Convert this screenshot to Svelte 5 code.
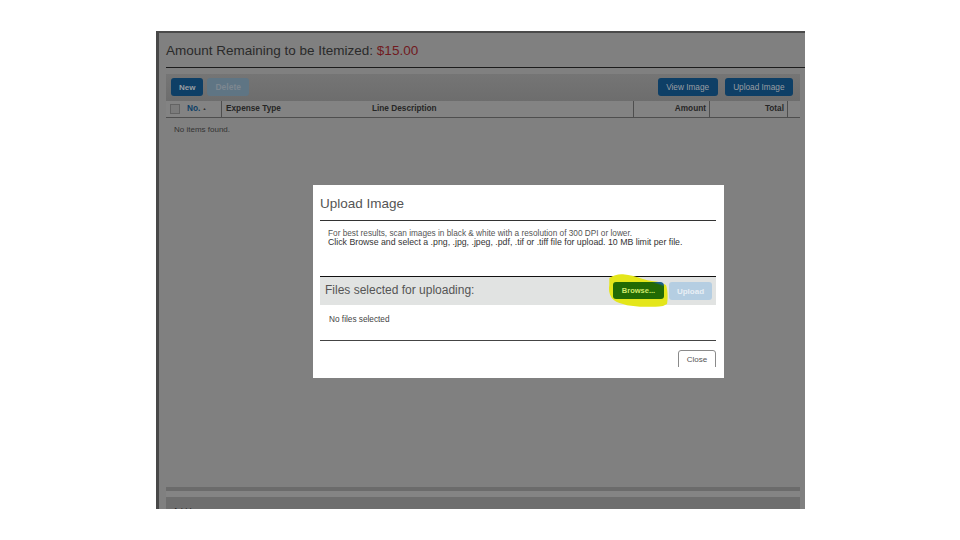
<script>
  const columns = [
    { label: 'Expense Type', cls: 'type' },
    { label: 'Line Description', cls: 'desc' },
    { label: 'Amount', cls: 'amount' },
    { label: 'Total', cls: 'total' },
  ];
</script>

<div class="shot">
  <div class="page">
    <h1>Amount Remaining to be Itemized: <span class="due">$15.00</span></h1>

    <div class="toolbar">
      <button class="btn">New</button>
      <button class="btn off">Delete</button>
      <span class="grow"></span>
      <button class="btn wide">View Image</button>
      <button class="btn wide">Upload Image</button>
    </div>

    <div class="thead">
      <div class="check"><span class="box"></span></div>
      <div class="no">No. <span class="sort">▲</span></div>
      {#each columns as c}
        <div class={c.cls}>{c.label}</div>
      {/each}
      <div class="end"></div>
    </div>
    <div class="empty">No items found.</div>

    <div class="bottom">
      <div class="band-dark"></div>
      <div class="band-light"></div>
      <div class="add">Add Image</div>
    </div>
  </div>

  <div class="modal">
    <h2>Upload Image</h2>
    <div class="hint">
      <div>For best results, scan images in black &amp; white with a resolution of 300 DPI or lower.</div>
      <div class="strong">Click Browse and select a .png, .jpg, .jpeg, .pdf, .tif or .tiff file for upload. 10 MB limit per file.</div>
    </div>
    <div class="files">
      <span class="files-title">Files selected for uploading:</span>
      <span class="browse-wrap">
        <svg class="marker" width="62" height="36" viewBox="0 0 62 36" aria-hidden="true">
          <path d="M1.3 4 C6 1 10 0 15 0.3 C22 1 29 3 35 5 C41 7 47 7 52 8.3 L58 11 C60 17 60 25 59 30 L55 32 C47 33 40 33 32 32.7 C26 32 20 32 15 30 C10 29 6 27 3.7 24 C1 20 0.5 15 1.3 11 Z" fill="#e4e61a" />
        </svg>
        <button class="browse">Browse...</button>
      </span>
      <button class="upload">Upload</button>
    </div>
    <div class="none">No files selected</div>
    <div class="foot">
      <button class="close">Close</button>
    </div>
  </div>
</div>

<style>
  :global(body) {
    margin: 0;
    background: #fff;
  }

  .shot {
    position: relative;
    width: 649px;
    height: 478px;
    margin: 31px 0 0 156px;
    overflow: hidden;
    font-family: "Liberation Sans", Arial, sans-serif;
  }

  .page {
    box-sizing: border-box;
    height: 100%;
    padding: 0 5px 0 7px;
    background: #808080;
    border-top: 2px solid #4a4a4a;
    border-left: 3px solid #484848;
    display: flex;
    flex-direction: column;
  }

  h1 {
    margin: 0 -5px 0 0;
    height: 34px;
    line-height: 36px;
    font-size: 13.5px;
    font-weight: 400;
    color: #2a2a2a;
    border-bottom: 1px solid #1c1c1c;
  }

  .due { color: #701a20; }

  .toolbar {
    margin-top: 6px;
    height: 27px;
    padding: 4px 7px 0 5px;
    box-sizing: border-box;
    display: flex;
    align-items: flex-start;
    gap: 4px;
    background: linear-gradient(#757575, #6d6d6d);
  }

  .grow { flex: 1; }

  .btn {
    height: 18px;
    padding: 0 8px;
    border: 0;
    border-radius: 3px;
    background: #0e3f66;
    color: #9a9ea2;
    font: 700 8px "Liberation Sans", Arial, sans-serif;
  }

  .btn.off {
    background: #5f7584;
    color: #7d8790;
    padding: 0 8px;
    font-size: 8.5px;
  }

  .btn.wide {
    margin-left: 3px;
    font-weight: 400;
    font-size: 8.25px;
    padding: 0 8.5px;
  }

  .thead {
    height: 16px;
    display: grid;
    grid-template-columns: 21px 35px 150px 262px 76px 78px 1fr;
    align-items: stretch;
    line-height: 15px;
    font-size: 8.25px;
    font-weight: 700;
    color: #262626;
    background: #838383;
    border-bottom: 1px solid #4e4e4e;
  }

  .thead > div { white-space: nowrap; }

  .check {
    padding: 3px 0 0 4px;
    box-sizing: border-box;
  }

  .box {
    display: block;
    width: 8px;
    height: 8px;
    border: 1px solid #636363;
    background: #7b7b7b;
  }

  .no {
    color: #0e3f66;
    border-right: 1px solid #4e4e4e;
  }

  .sort {
    font-size: 4px;
    vertical-align: 1px;
    color: #333;
  }

  .type { padding-left: 4px; }

  .desc { border-right: 1px solid #4e4e4e; }

  .amount {
    text-align: right;
    padding-right: 3px;
    border-right: 1px solid #4e4e4e;
  }

  .total {
    text-align: right;
    padding-right: 3px;
    border-right: 1px solid #4e4e4e;
  }

  .empty {
    margin: 7px 0 0 8px;
    font-size: 8px;
    line-height: 10px;
    color: #333;
  }

  .bottom {
    margin-top: auto;
    height: 22px;
  }

  .band-dark {
    height: 4px;
    background: #6b6b6b;
  }

  .band-light {
    height: 6px;
    background: #848484;
  }

  .add {
    height: 12px;
    padding: 9px 0 0 7px;
    box-sizing: border-box;
    line-height: 10px;
    font-size: 8px;
    color: #222;
    background: #6e6e6e;
  }

  .modal {
    position: absolute;
    left: 157px;
    top: 154px;
    box-sizing: border-box;
    width: 411px;
    height: 193px;
    padding: 0 8px 0 7px;
    background: #fff;
    display: flex;
    flex-direction: column;
  }

  h2 {
    margin: 0;
    height: 35px;
    flex: none;
    line-height: 38px;
    font-size: 13.5px;
    font-weight: 400;
    color: #555;
    border-bottom: 1px solid #333;
  }

  .hint {
    height: 55px;
    flex: none;
    padding: 8px 0 0 8px;
    box-sizing: border-box;
    font-size: 8.25px;
    line-height: 9px;
    color: #555;
    white-space: nowrap;
  }

  .hint .strong {
    font-size: 8.75px;
    color: #333;
  }

  .files {
    height: 29px;
    flex: none;
    box-sizing: border-box;
    border-top: 1px solid #111;
    background: #e1e3e2;
    padding: 5px 4px 0 5px;
    display: flex;
    align-items: flex-start;
  }

  .files-title {
    flex: 1;
    line-height: 17px;
    font-size: 12px;
    color: #555;
    white-space: nowrap;
  }

  .browse-wrap {
    position: relative;
    display: block;
    margin-right: 5px;
  }

  .marker {
    position: absolute;
    left: -5px;
    top: -8px;
  }

  .browse {
    position: relative;
    display: block;
    width: 51px;
    height: 17px;
    padding: 0;
    border: 0;
    border-radius: 3px 4px 3px 3px;
    background: linear-gradient(200deg, #1a5f8f 0, #1a5f8f 8%, #226a04 14%);
    color: #cfe96a;
    font: 700 7.5px "Liberation Sans", Arial, sans-serif;
  }

  .upload {
    width: 43px;
    height: 18px;
    padding: 0;
    border: 0;
    border-radius: 3px;
    background: #b5cee2;
    color: #e8eff5;
    font: 700 8px "Liberation Sans", Arial, sans-serif;
  }

  .none {
    height: 36px;
    flex: none;
    box-sizing: border-box;
    padding: 10px 0 0 9px;
    font-size: 8.25px;
    line-height: 10px;
    color: #444;
    border-bottom: 1px solid #444;
  }

  .foot {
    height: 17px;
    margin-top: 9px;
    flex: none;
    overflow: hidden;
    display: flex;
    justify-content: flex-end;
  }

  .close {
    width: 38px;
    height: 24px;
    padding: 0 0 6px;
    background: #fff;
    border: 1px solid #8a8a8a;
    border-radius: 3px;
    color: #555;
    font: 400 8px "Liberation Sans", Arial, sans-serif;
  }
</style>
